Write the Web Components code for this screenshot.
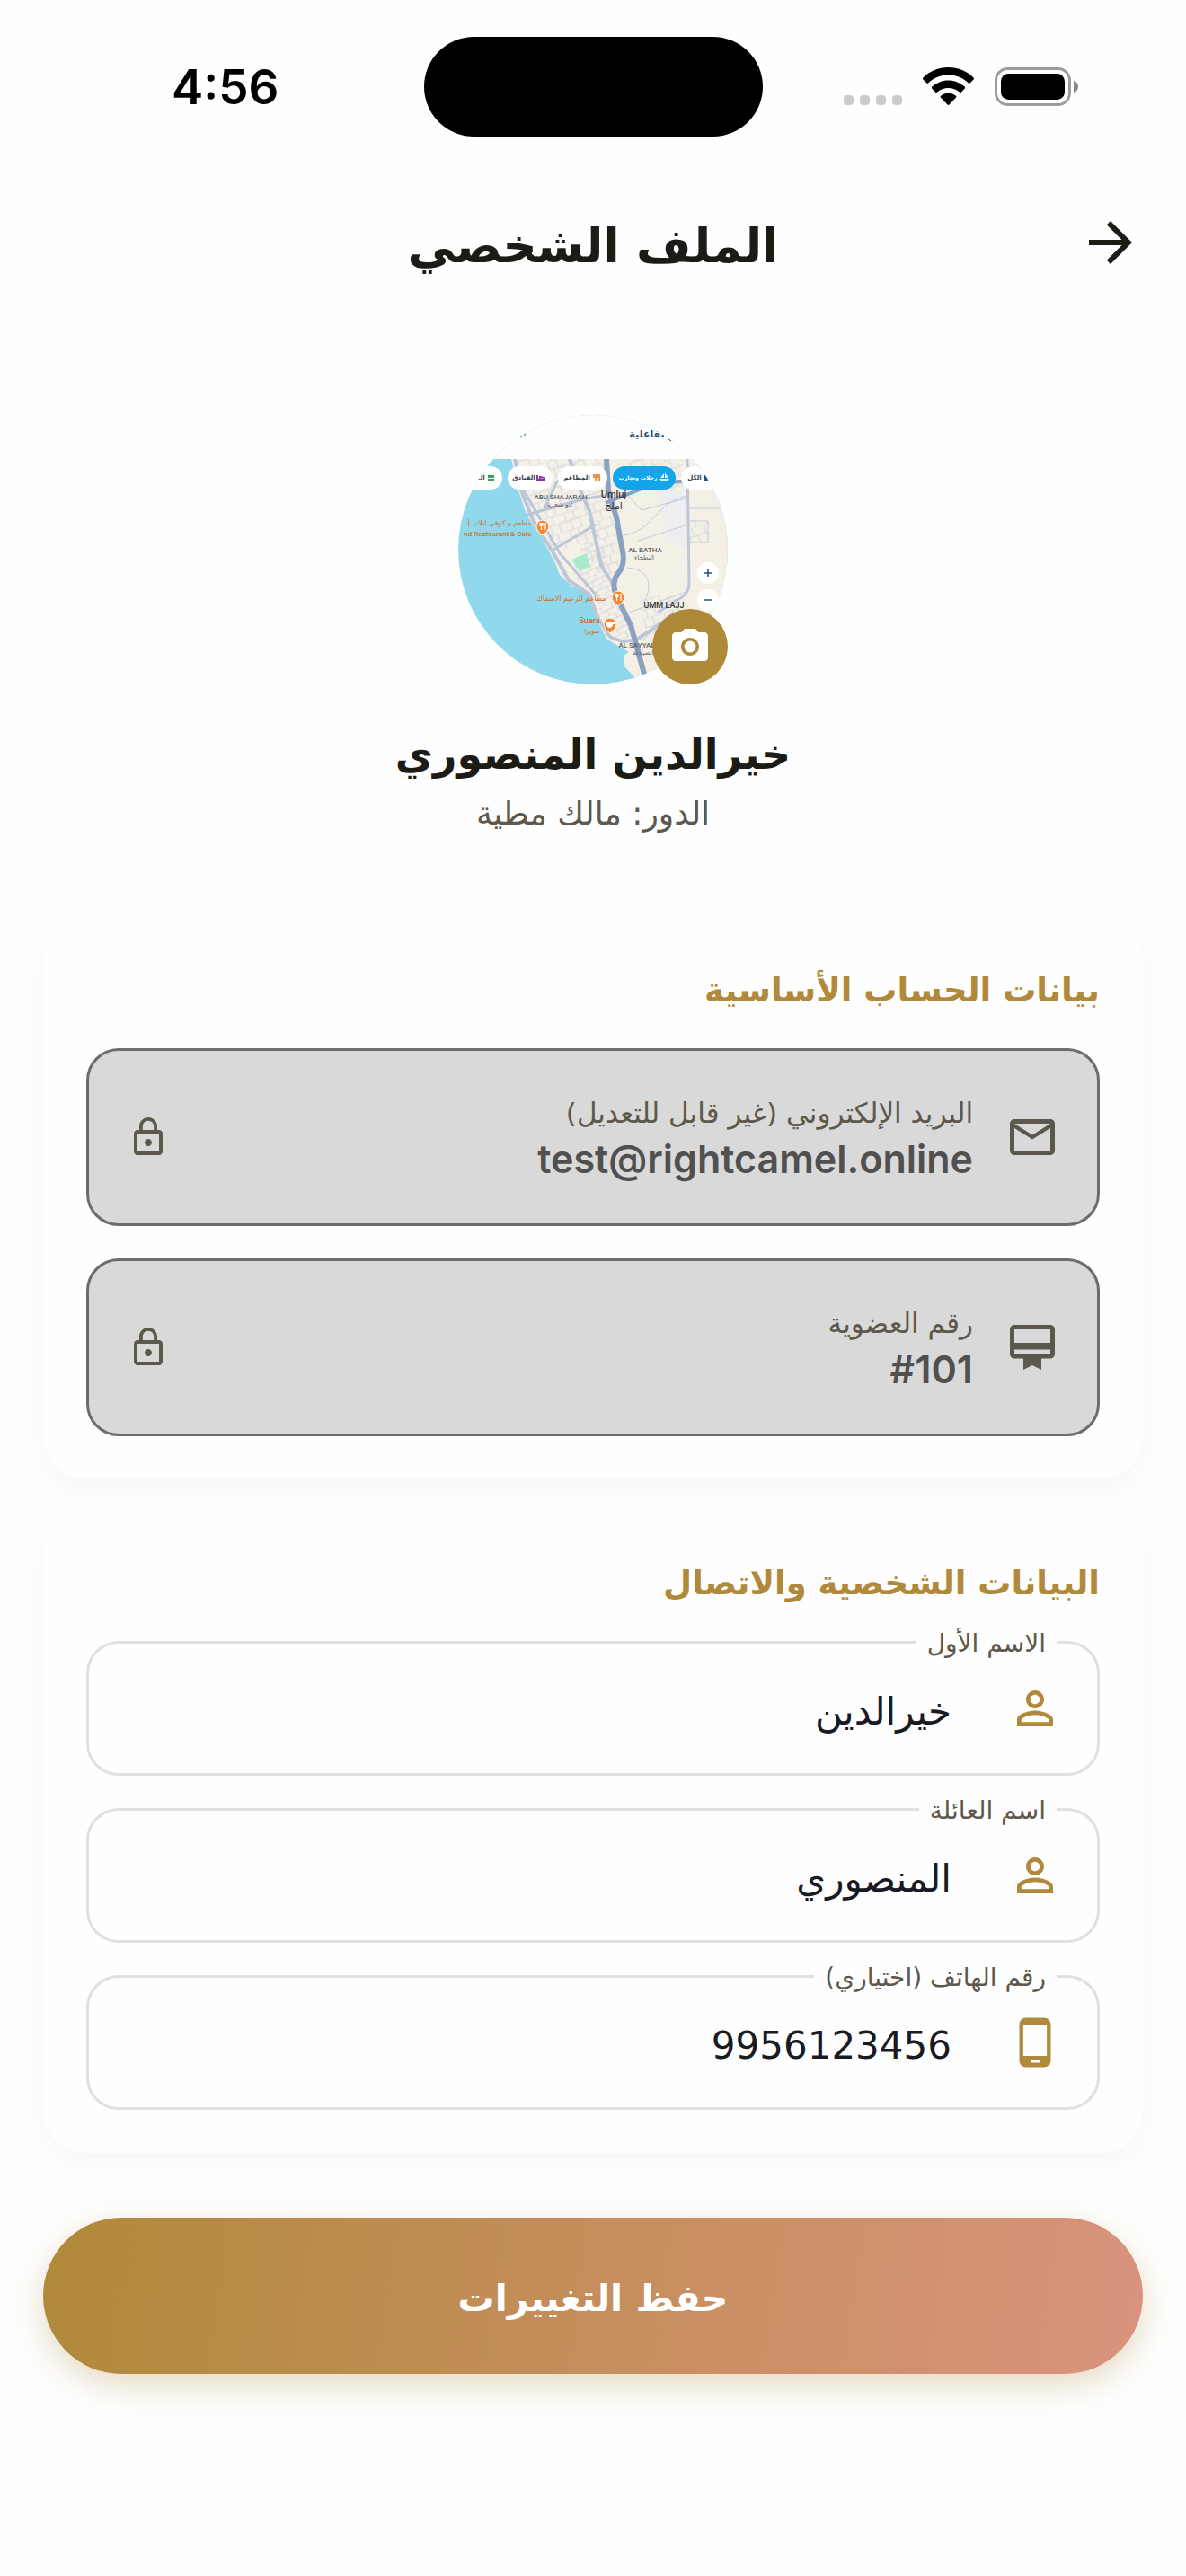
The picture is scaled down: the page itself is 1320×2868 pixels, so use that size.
<!DOCTYPE html>
<html lang="ar" dir="rtl">
<head>
<meta charset="utf-8">
<meta name="viewport" content="width=device-width, initial-scale=1">
<title>الملف الشخصي</title>
<style>
    body {
        margin: 0;
        min-height: 100vh;
        background: #fefefe;
        color: #1c1b16;
        font-family: "DejaVu Sans", sans-serif;
        --gold: #b08a3a;
        --muted: #5d584c;
        --line: #e0e0e0;
    }
    main {
        display: flex;
        flex-direction: column;
        gap: 36px;
        padding: 0 48px 72px;
    }
</style>
</head>
<body>
<status-bar time="4:56"></status-bar>
<app-header>الملف الشخصي</app-header>
<main>
    <profile-summary>
        <map-avatar slot="avatar"></map-avatar>
        <span slot="name">خيرالدين المنصوري</span>
        <span slot="role">الدور: مالك مطية</span>
    </profile-summary>
    <info-card heading="بيانات الحساب الأساسية">
        <locked-field icon="mail" label="البريد الإلكتروني (غير قابل للتعديل)" value="test@rightcamel.online"></locked-field>
        <locked-field icon="membership" label="رقم العضوية" value="#101"></locked-field>
    </info-card>
    <info-card heading="البيانات الشخصية والاتصال">
        <text-field icon="person" label="الاسم الأول" value="خيرالدين"></text-field>
        <text-field icon="person" label="اسم العائلة" value="المنصوري"></text-field>
        <text-field icon="phone" type="tel" label="رقم الهاتف (اختياري)" value="9956123456"></text-field>
    </info-card>
    <save-button>حفظ التغييرات</save-button>
</main>

<script>
const ICONS = {
    arrow: 'M12 4l-1.41 1.41L16.17 11H4v2h12.17l-5.58 5.59L12 20l8-8z',
    mail: 'M22 6c0-1.1-.9-2-2-2H4c-1.1 0-2 .9-2 2v12c0 1.1.9 2 2 2h16c1.1 0 2-.9 2-2V6zm-2 0l-8 5-8-5h16zm0 12H4V8l8 5 8-5v10z',
    membership: 'M20 2H4c-1.11 0-2 .89-2 2v11c0 1.11.89 2 2 2h4v5l4-2 4 2v-5h4c1.11 0 2-.89 2-2V4c0-1.11-.89-2-2-2zm0 13H4v-2h16v2zm0-5H4V4h16v6z',
    lock: 'M12 17c1.1 0 2-.9 2-2s-.9-2-2-2-2 .9-2 2 .9 2 2 2zm6-9h-1V6c0-2.76-2.24-5-5-5S7 3.24 7 6v2H6c-1.1 0-2 .9-2 2v10c0 1.1.9 2 2 2h12c1.1 0 2-.9 2-2V10c0-1.1-.9-2-2-2zM8.9 6c0-1.71 1.39-3.1 3.1-3.1s3.1 1.39 3.1 3.1v2H8.9V6zM18 20H6V10h12v10z',
    person: 'M12 5.9c1.16 0 2.1.94 2.1 2.1s-.94 2.1-2.1 2.1S9.9 9.16 9.9 8s.94-2.1 2.1-2.1m0 9c2.97 0 6.1 1.46 6.1 2.1v1.1H5.9V17c0-.64 3.13-2.1 6.1-2.1M12 4C9.79 4 8 5.79 8 8s1.79 4 4 4 4-1.79 4-4-1.79-4-4-4zm0 9c-2.67 0-8 1.34-8 4v3h16v-3c0-2.66-5.33-4-8-4z',
    phone: 'M16 1H8C6.34 1 5 2.34 5 4v16c0 1.66 1.34 3 3 3h8c1.66 0 3-1.34 3-3V4c0-1.66-1.34-3-3-3zm-2 20h-4v-1h4v1zm3.25-3H6.75V4h10.5v14z',
    camera: 'M12 8.8a3.2 3.2 0 1 0 0 6.4 3.2 3.2 0 0 0 0-6.4zM9 2L7.17 4H4c-1.1 0-2 .9-2 2v12c0 1.1.9 2 2 2h16c1.1 0 2-.9 2-2V6c0-1.1-.9-2-2-2h-3.17L15 2H9zm3 15c-2.76 0-5-2.24-5-5s2.24-5 5-5 5 2.24 5 5-2.24 5-5 5z'
};

class MdIcon extends HTMLElement {
    constructor() {
        super();
        this.attachShadow({ mode: 'open' });
    }

    connectedCallback() {
        this.shadowRoot.innerHTML = `
            <style>
                :host { display: block; flex: none; width: var(--icon-size, 60px); height: var(--icon-size, 60px); }
                svg { display: block; width: 100%; height: 100%; fill: currentColor; }
            </style>
            <svg viewBox="0 0 24 24" aria-hidden="true"><path d="${ICONS[this.getAttribute('name')]}"/></svg>
        `;
    }
}

class StatusBar extends HTMLElement {
    constructor() {
        super();
        this.attachShadow({ mode: 'open' });
    }

    connectedCallback() {
        this.shadowRoot.innerHTML = `
            <style>
                :host {
                    display: grid;
                    grid-template-columns: 1fr 377px 1fr;
                    align-items: center;
                    justify-items: center;
                    padding: 41px 30px 34px;
                    direction: ltr;
                    color: #000;
                }
                time { font: 600 53px/60px Inter, sans-serif; }
                .island { width: 100%; height: 111px; border-radius: 56px; background: #000; }
                .status { display: flex; gap: 23px; }
                svg { display: block; }
            </style>
            <time>${this.getAttribute('time')}</time>
            <div class="island"></div>
            <div class="status">
                <svg width="65" height="43" fill="#cbcbcb">
                    <rect x="0" y="31" width="11" height="11" rx="4"/>
                    <rect x="18" y="31" width="11" height="11" rx="4"/>
                    <rect x="36" y="31" width="11" height="11" rx="4"/>
                    <rect x="54" y="31" width="11" height="11" rx="4"/>
                </svg>
                <svg width="57" height="43" viewBox="0 0 57 43">
                    <path d="M28.500 0C39.500 0 49.500 4.300 56.500 11.400c.7.7.7 1.500 0 2.200l-3.700 3.700c-.7.700-1.500.700-2.200 0C44.800 11.700 37 8.600 28.500 8.600S12.200 11.700 6.400 17.300c-.7.700-1.500.700-2.200 0L.5 13.600c-.7-.7-.7-1.500 0-2.200C7.500 4.300 17.500 0 28.500 0z"/>
                    <path d="M28.500 14.500c7 0 13.300 2.700 18.100 7.100.7.700.7 1.500 0 2.200L43 27.400c-.7.700-1.500.7-2.200.1-3.300-2.800-7.600-4.500-12.300-4.500s-9 1.700-12.300 4.500c-.7.600-1.500.6-2.200-.1l-3.600-3.600c-.7-.7-.7-1.500 0-2.200 4.800-4.400 11.100-7.100 18.100-7.100z"/>
                    <path d="M28.500 28.700c3.200 0 6.100 1.100 8.400 3 .7.600.7 1.400.1 2.100l-7.300 7.500c-.8.800-1.600.8-2.400 0L20 33.800c-.6-.7-.6-1.500.1-2.100 2.300-1.900 5.200-3 8.400-3z"/>
                </svg>
                <svg width="93" height="43" viewBox="0 0 93 43">
                    <rect x="1.500" y="1.500" width="82" height="40" rx="13" fill="none" stroke="#9c9c9c" stroke-width="3"/>
                    <rect x="7" y="7" width="71" height="29" rx="8.500"/>
                    <path d="M88 14.500c3 1.300 5 3.800 5 7s-2 5.700-5 7z" fill="#868686"/>
                </svg>
            </div>
        `;
    }
}

class AppHeader extends HTMLElement {
    constructor() {
        super();
        this.attachShadow({ mode: 'open' });
        this.shadowRoot.innerHTML = `
            <style>
                :host {
                    display: grid;
                    grid-template-columns: 72px 1fr 72px;
                    align-items: center;
                    height: 168px;
                    padding: 0 48px;
                }
                button { display: block; padding: 0; border: 0; background: none; color: inherit; --icon-size: 72px; }
                h1 { margin: 0; padding-top: 8px; font-size: 53px; line-height: 72px; text-align: center; }
            </style>
            <button type="button" aria-label="رجوع"><md-icon name="arrow"></md-icon></button>
            <h1><slot></slot></h1>
        `;
    }
}

class ProfileSummary extends HTMLElement {
    constructor() {
        super();
        this.attachShadow({ mode: 'open' });
        this.shadowRoot.innerHTML = `
            <style>
                :host { display: flex; flex-direction: column; align-items: center; padding: 108px 0 57px; }
                h2 { margin: 36px 0 0; font-size: 46px; line-height: 84px; }
                p { margin: 0; font-size: 36px; line-height: 48px; color: var(--muted); }
            </style>
            <slot name="avatar"></slot>
            <h2><slot name="name"></slot></h2>
            <p><slot name="role"></slot></p>
        `;
    }
}

class MapAvatar extends HTMLElement {
    constructor() {
        super();
        this.attachShadow({ mode: 'open' });
        this.shadowRoot.innerHTML = `
            <style>
                :host { display: block; position: relative; width: 300px; height: 300px; }
                .map { display: block; border-radius: 50%; }
                .map text { text-anchor: middle; font-family: "DejaVu Sans", sans-serif; }
                .map .latin text { font-family: Roboto, sans-serif; }
                button {
                    position: absolute;
                    right: 0;
                    bottom: 0;
                    display: grid;
                    place-items: center;
                    width: 84px;
                    height: 84px;
                    padding: 0;
                    border: 0;
                    border-radius: 50%;
                    background: #ae8938;
                    color: #fff;
                    --icon-size: 48px;
                }
            </style>
            <svg class="map" width="300" height="300" viewBox="0 0 300 300" direction="rtl">
                <defs>
                    <pattern id="blocks" width="24" height="20" patternUnits="userSpaceOnUse" patternTransform="rotate(-18)">
                        <path d="M0 0H24M0 10H24M6 0V10M16 0V10M11 10V20M21 10V20" fill="none" stroke="#d0d5df" stroke-width="1"/>
                    </pattern>
                    <pattern id="fine" width="12" height="12" patternUnits="userSpaceOnUse" patternTransform="rotate(-28)">
                        <path d="M0 0H12M0 6H12M3 0V6M8 6V12" fill="none" stroke="#d0d5df" stroke-width="1"/>
                    </pattern>
                </defs>
                <rect width="300" height="300" fill="#90d9ed"/>
                <!-- land and street blocks -->
                <path d="M59 49L67 84 76 111 93 137 109 167 113 178 126 190 149 200 151 220 159 237 166 250 190 264 184 268 185 280 197 293 300 300V49z" fill="#f4f0e6"/>
                <path d="M64 49L72 84 84 115 108 152 139 142 150 167 173 187 182 150 162 49z" fill="url(#blocks)"/>
                <path d="M139 142L126 178 150 198 160 232 178 250 196 246 172 190 160 142z" fill="url(#fine)"/>
                <path d="M190 49h60v34h-56zM258 118h20v24h-20zM200 204l46-6v46h-36z" fill="url(#blocks)"/>
                <path d="M222 84h32v66l-20-12z" fill="#efedf0"/>
                <path d="M126 161L143 154 147 169 135 174z" fill="#a9ebc9"/>
                <g fill="none" stroke="#c1cadb" stroke-width="1">
                    <path d="M184 134C216 130 222 96 254 90M188 170C220 172 214 200 204 212M184 84L204 106 256 92M258 118h20v24h-20M200 140L256 122M268 49V84M256 58h44M256 104h44M190 220L256 196M206 250L240 218"/>
                </g>
                <g fill="none" stroke="#bcc6d8" stroke-linejoin="round">
                    <path d="M63 49L70 84 83 117 106 154 123 184 146 200 156 227 169 247 182 252 197 251 214 240 240 222" stroke-width="4"/>
                    <path d="M124 49L136 84 146 107 159 167 173 190" stroke-width="4"/>
                    <path d="M73 84L113 154 153 200M76 111L139 94 166 89M104 151L153 122M96 104L110 74 128 58" stroke-width="3"/>
                    <path d="M255 49L257 187Q257 200 244 206L222 220" stroke-width="3"/>
                </g>
                <g fill="none" stroke="#8ba1c1" stroke-linejoin="round">
                    <path d="M165 49L167 84 176 114 182 147Q187 166 178 176 170 186 176 202L192 234 208 292" stroke-width="6"/>
                    <path d="M164 98L212 79 246 74H300" stroke-width="4"/>
                </g>
                <!-- app bar of the map -->
                <rect width="300" height="49" fill="#fefefe"/>
                <text x="210" y="25" font-size="11" font-weight="700" fill="#24507a">تفاعلية</text>
                <path d="M234 27l3 2M67 24l4-1M74 20v3" stroke="#24507a" stroke-width="1"/>
                <!-- category chips -->
                <g fill="#fff">
                    <rect x="0" y="57" width="49" height="26" rx="13"/>
                    <rect x="55" y="57" width="50" height="26" rx="13"/>
                    <rect x="111" y="57" width="55" height="26" rx="13"/>
                    <rect x="172" y="57" width="70" height="26" rx="13" fill="#12a5ea"/>
                    <rect x="248" y="57" width="60" height="26" rx="13"/>
                </g>
                <g font-size="7" font-weight="700" fill="#33424f">
                    <text x="26" y="72">الـ</text>
                    <text x="73" y="72">الفنادق</text>
                    <text x="132" y="72">المطاعم</text>
                    <text x="200" y="72" font-size="6" fill="#fff">رحلات وتجارب</text>
                    <text x="263" y="72">الكل</text>
                </g>
                <path d="M33 67h3v3h-3zM37 67h3v3h-3zM33 71h3v3h-3zM37 71h3v3h-3z" fill="#2eaa4a"/>
                <path d="M88 67v7M88 72h8M96 74v-4l-5-1v3" stroke="#8e35ab" stroke-width="2" fill="none"/>
                <path d="M151 66v3h4v-3M153 66v8M157 74v-8" stroke="#ef9440" stroke-width="2" fill="none"/>
                <path d="M225 70l4-5v5zM230 64l4 6h-4zM224 71h11l-2 3h-7z" fill="#d8f1fc"/>
                <path d="M274 67h4v7h-4z" fill="#24507a"/>
                <!-- places -->
                <g class="latin" fill="#5a5e66" font-size="8" font-weight="500" direction="ltr">
                    <text x="114" y="94">ABU SHAJARAH</text>
                    <text x="173" y="92" font-size="11" fill="#333">Umluj</text>
                    <text x="208" y="153">AL BATHA</text>
                    <text x="229" y="215" font-size="9" fill="#333">UMM LAJJ</text>
                    <text x="199" y="259">AL SAYYAD</text>
                </g>
                <g fill="#5a5e66" font-size="7">
                    <text x="113" y="102">ابو شجرة</text>
                    <text x="173" y="105" font-size="11" fill="#333">املج</text>
                    <text x="207" y="161">البطحاء</text>
                    <text x="206" y="267">الصيادلة</text>
                </g>
                <g fill="#d06f1c" font-size="8">
                    <text x="46" y="123">مطعم و كوفي ايلاند |</text>
                    <text x="126" y="207">مطاعم الزعيم الاسماك</text>
                    <text x="149" y="243" font-size="7">سويرا</text>
                </g>
                <g class="latin" fill="#d06f1c" font-size="8" font-weight="500" direction="ltr">
                    <text x="44" y="135">nd Restaurant &amp; Cafe</text>
                    <text x="146" y="232" font-size="9">Suera</text>
                </g>
                <g fill="#f58634" stroke="#fff" stroke-width="1">
                    <path d="M94 134q-7-5-7-10a7 7 0 0 1 14 0q0 5-7 10z"/>
                    <path d="M178 213q-7-5-7-10a7 7 0 0 1 14 0q0 5-7 10z"/>
                    <path d="M169 243q-7-5-7-10a7 7 0 0 1 14 0q0 5-7 10z"/>
                </g>
                <path d="M91 120v3h3v-3M92.500 120v8M97 128v-8M175 199v3h3v-3M176.500 199v8M181 207v-8" stroke="#fff" stroke-width="1.300" fill="none"/>
                <path d="M165 230h7v4q-1 3-3.500 3T165 234zM172 231h2v2h-2" fill="#fff"/>
                <!-- zoom controls -->
                <circle cx="278" cy="176" r="12" fill="#fff"/>
                <circle cx="278" cy="206" r="12" fill="#fff"/>
                <path d="M274 176h8M278 172v8M274 206h8" stroke="#24507a" stroke-width="1.500"/>
            </svg>
            <button type="button" aria-label="تغيير الصورة"><md-icon name="camera"></md-icon></button>
        `;
    }
}

class InfoCard extends HTMLElement {
    constructor() {
        super();
        this.attachShadow({ mode: 'open' });
    }

    connectedCallback() {
        this.shadowRoot.innerHTML = `
            <style>
                :host {
                    display: block;
                    padding: 48px;
                    border-radius: 48px;
                    background: #fefefe;
                    box-shadow: 0 12px 30px rgba(0, 0, 0, 0.03);
                }
                h3 { margin: 0 0 32px; font-size: 37px; line-height: 64px; color: var(--gold); }
                .fields { display: flex; flex-direction: column; gap: 36px; }
            </style>
            <h3>${this.getAttribute('heading')}</h3>
            <div class="fields"><slot></slot></div>
        `;
    }
}

class LockedField extends HTMLElement {
    constructor() {
        super();
        this.attachShadow({ mode: 'open' });
    }

    connectedCallback() {
        this.shadowRoot.innerHTML = `
            <style>
                :host {
                    display: flex;
                    align-items: center;
                    gap: 36px;
                    padding: 45px 42px;
                    border: 3px solid #6c6c6c;
                    border-radius: 36px;
                    background: #d9d9d9;
                    color: var(--muted);
                }
                .text { flex: 1; min-width: 0; }
                label { display: block; font-size: 31px; line-height: 48px; }
                input {
                    display: block;
                    box-sizing: border-box;
                    width: 100%;
                    height: 54px;
                    padding: 0;
                    border: 0;
                    background: none;
                    color: #505050;
                    font: 600 43px/54px Inter, sans-serif;
                    direction: ltr;
                    text-align: right;
                }
                .lock { --icon-size: 48px; }
            </style>
            <md-icon name="${this.getAttribute('icon')}"></md-icon>
            <div class="text">
                <label for="value">${this.getAttribute('label')}</label>
                <input id="value" readonly value="${this.getAttribute('value')}">
            </div>
            <md-icon class="lock" name="lock"></md-icon>
        `;
    }
}

class TextField extends HTMLElement {
    constructor() {
        super();
        this.attachShadow({ mode: 'open' });
    }

    connectedCallback() {
        this.shadowRoot.innerHTML = `
            <style>
                :host {
                    display: flex;
                    position: relative;
                    align-items: center;
                    gap: 63px;
                    padding: 0 39px;
                    border: 3px solid var(--line);
                    border-radius: 36px;
                }
                /* floating label, cuts the top border */
                label {
                    position: absolute;
                    top: -18px;
                    inset-inline-start: 45px;
                    padding: 0 12px;
                    background: #fefefe;
                    color: var(--muted);
                    font-size: 28px;
                    line-height: 36px;
                }
                md-icon { color: var(--gold); }
                input {
                    flex: 1;
                    box-sizing: border-box;
                    min-width: 0;
                    height: 144px;
                    padding: 6px 0 0;
                    border: 0;
                    background: none;
                    color: #1a1a22;
                    font: 42px "DejaVu Sans", sans-serif;
                    text-align: right;
                    outline: none;
                }
            </style>
            <label for="value">${this.getAttribute('label')}</label>
            <md-icon name="${this.getAttribute('icon')}"></md-icon>
            <input id="value" type="${this.getAttribute('type') || 'text'}" value="${this.getAttribute('value')}">
        `;
    }
}

class SaveButton extends HTMLElement {
    constructor() {
        super();
        this.attachShadow({ mode: 'open' });
        this.shadowRoot.innerHTML = `
            <style>
                :host { display: block; padding-top: 36px; }
                button {
                    display: block;
                    width: 100%;
                    height: 174px;
                    padding: 6px 0 0;
                    border: 0;
                    border-radius: 87px;
                    background: linear-gradient(98deg, #b0893a, #da937e);
                    box-shadow: 0 12px 36px rgba(176, 138, 58, 0.3);
                    color: #fff;
                    font: 700 41px "DejaVu Sans", sans-serif;
                }
            </style>
            <button type="button"><slot></slot></button>
        `;
    }
}

customElements.define('md-icon', MdIcon);
customElements.define('status-bar', StatusBar);
customElements.define('app-header', AppHeader);
customElements.define('profile-summary', ProfileSummary);
customElements.define('map-avatar', MapAvatar);
customElements.define('info-card', InfoCard);
customElements.define('locked-field', LockedField);
customElements.define('text-field', TextField);
customElements.define('save-button', SaveButton);
</script>
</body>
</html>
